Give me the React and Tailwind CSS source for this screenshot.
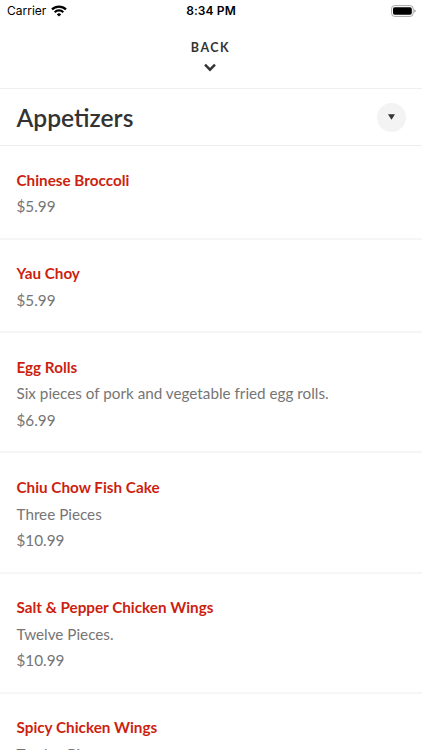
const items = [
  { name: "Chinese Broccoli", price: "$5.99" },
  { name: "Yau Choy", price: "$5.99" },
  { name: "Egg Rolls", note: "Six pieces of pork and vegetable fried egg rolls.", price: "$6.99" },
  { name: "Chiu Chow Fish Cake", note: "Three Pieces", price: "$10.99" },
  { name: "Salt & Pepper Chicken Wings", note: "Twelve Pieces.", price: "$10.99" },
  { name: "Spicy Chicken Wings", note: "Twelve Pieces.", price: "$10.99" },
];

function StatusBar() {
  return (
    <div className="grid h-[22px] shrink-0 grid-cols-3 items-center pl-[7px] pr-[6px] font-['Inter',sans-serif] text-black">
      <div className="flex items-center gap-[5px]">
        <span className="text-[12px] leading-none">Carrier</span>
        <svg width="16" height="12" viewBox="0 0 16 12" fill="none" stroke="currentColor" strokeWidth="2.2">
          <path d="M1 4.4a10 10 0 0 1 14 0" />
          <path d="M3.7 7.2a6.1 6.1 0 0 1 8.6 0" />
          <path d="M8 11.6 5.8 9.4a3.1 3.1 0 0 1 4.4 0Z" fill="currentColor" stroke="none" />
        </svg>
      </div>
      <span className="pr-[1px] text-center text-[12px] font-semibold leading-none tracking-[0.1px]">8:34 PM</span>
      <svg className="justify-self-end" width="26" height="12" viewBox="0 0 26 12">
        <rect x="1.6" y="0.6" width="21.6" height="10.8" rx="3" fill="none" stroke="#a6a6a6" />
        <rect x="3" y="2.2" width="18.8" height="7.6" rx="1.7" fill="#000" />
        <path d="M24.4 4.2c1.6.6 1.6 3 0 3.6Z" fill="#8c8c8c" />
      </svg>
    </div>
  );
}

export default function App() {
  return (
    <div className="flex h-[750px] w-[422px] flex-col overflow-hidden bg-white font-['Lato',sans-serif]">
      <StatusBar />
      <button className="flex h-[67px] shrink-0 flex-col items-center border-b border-[#eeeeee] pr-[2px] pt-[18px] text-[#333333]">
        <span className="pl-[1px] text-[12.5px] font-bold leading-4 tracking-[1.5px]">BACK</span>
        <svg className="mt-[7px]" width="12" height="9" viewBox="0 0 12 9" fill="none" stroke="currentColor" strokeWidth="2.4">
          <path d="M1 1.7 6 6.7 11 1.7" />
        </svg>
      </button>
      <div className="flex h-[57px] shrink-0 items-center justify-between border-b border-[#eeeeee] pl-[16.5px] pr-[16px]">
        <h1 className="pt-px text-[24.6px] font-semibold leading-8 text-[#333333]">Appetizers</h1>
        <button className="flex size-[29px] items-center justify-center rounded-full bg-[#f3f3f3]">
          <svg width="7" height="6" viewBox="0 0 7 6" fill="#333333">
            <path d="M0 .3h7L3.5 5.7Z" />
          </svg>
        </button>
      </div>
      <ul>
        {items.map((item) => (
          <li key={item.name} className="border-b-2 border-[#f6f6f6] pb-[17.8px] pl-[16.5px] pt-[20.6px] text-[15.25px] leading-[26.6px] text-[#757575]">
            <h2 className="font-bold text-[#cc1f0f]">{item.name}</h2>
            {item.note && <p>{item.note}</p>}
            <p>{item.price}</p>
          </li>
        ))}
      </ul>
    </div>
  );
}
